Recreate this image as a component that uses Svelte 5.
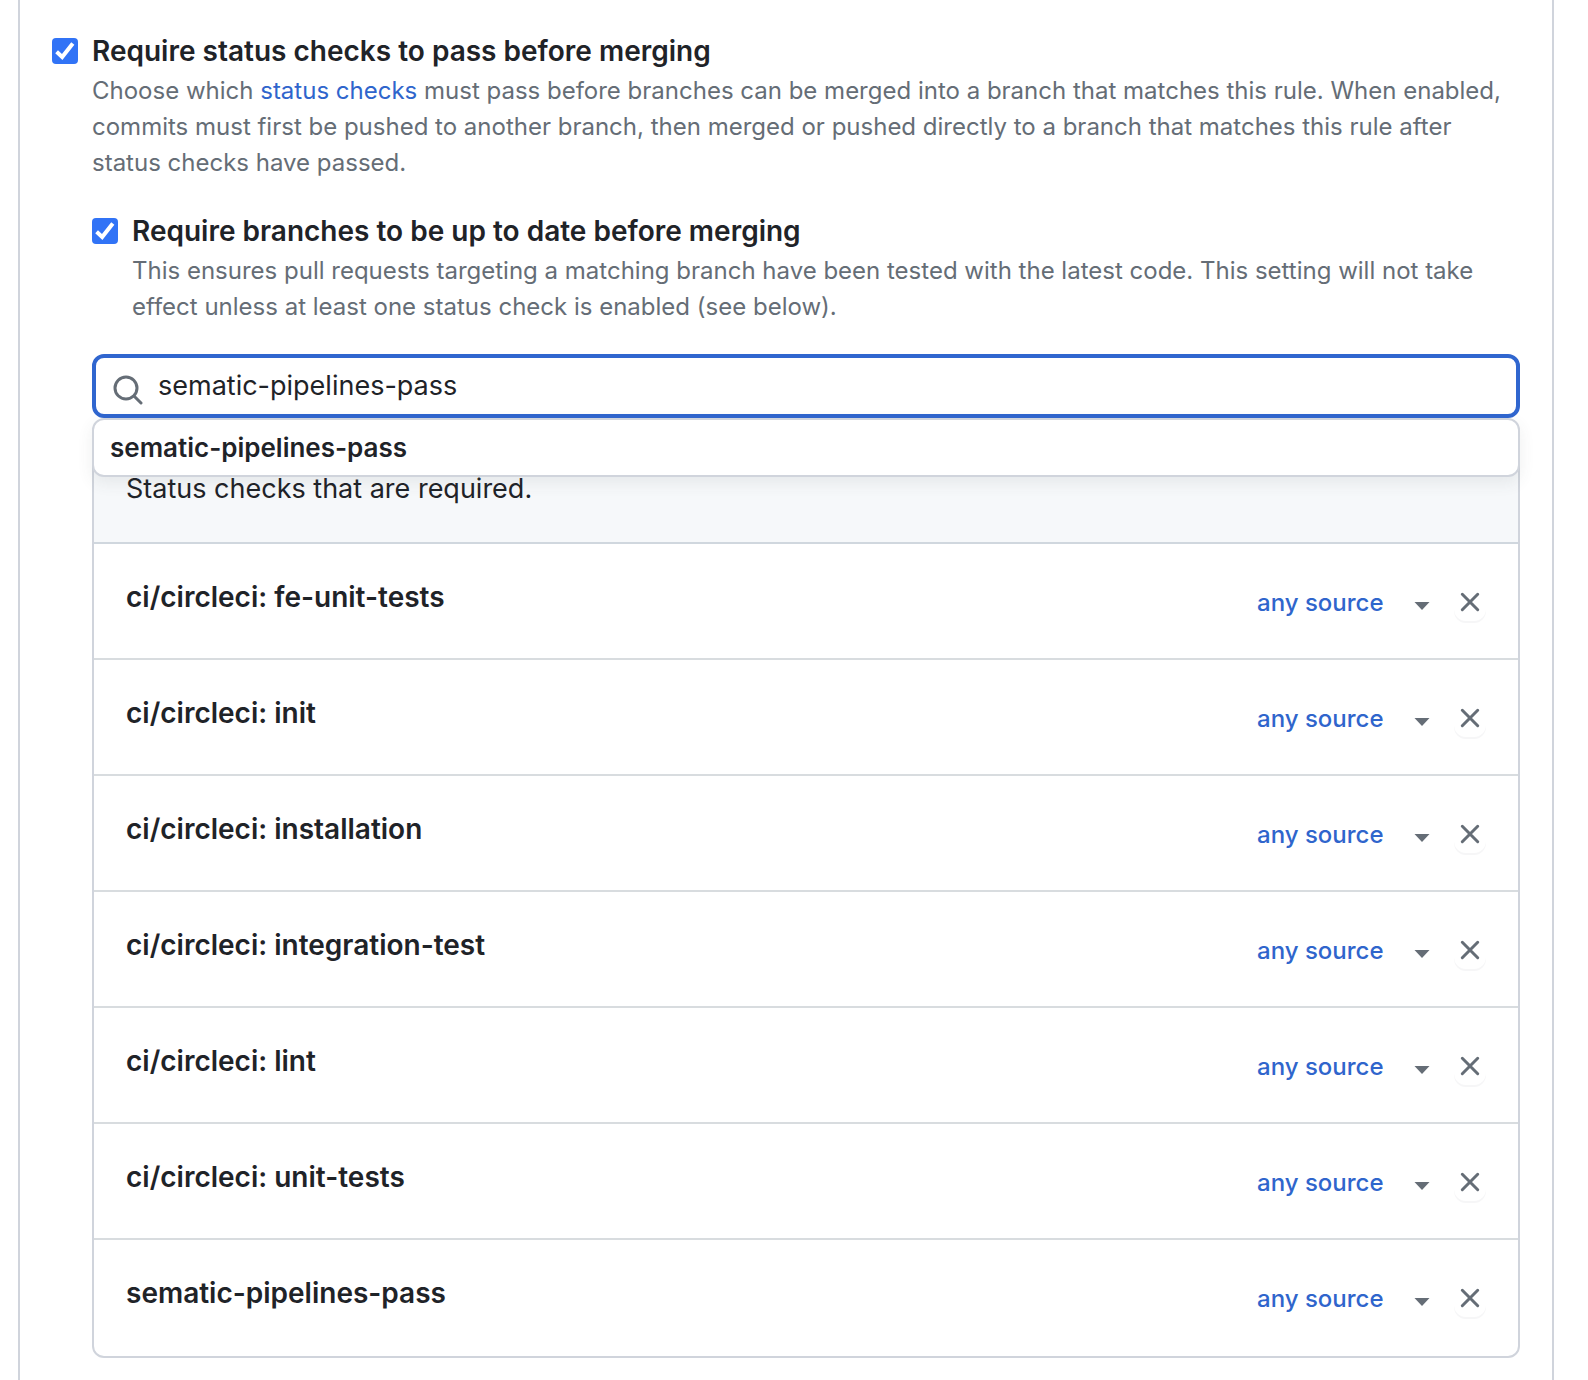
<script>
  const checks = [
    'ci/circleci: fe-unit-tests',
    'ci/circleci: init',
    'ci/circleci: installation',
    'ci/circleci: integration-test',
    'ci/circleci: lint',
    'ci/circleci: unit-tests',
    'sematic-pipelines-pass',
  ];
  let strict = $state(true);
  let required = $state(true);
  let query = $state('sematic-pipelines-pass');
</script>

{#snippet tick()}
  <svg class="tick" viewBox="0 0 26 26" aria-hidden="true">
    <path d="M4.6 13.8 10.2 19 20.8 5.4" fill="none" stroke="#fff" stroke-width="4" />
  </svg>
{/snippet}

<main class="panel">
  <section class="rule">
    <span class="box">
      <input id="required" type="checkbox" bind:checked={required} aria-describedby="required-note" />
      {@render tick()}
    </span>
    <div class="body">
      <label class="title" for="required">Require status checks to pass before merging</label>
      <p class="note" id="required-note">
        Choose which <a href="#status-checks">status checks</a> must pass before branches can be merged into a
        branch that matches this rule. When enabled, commits must first be pushed to another branch, then merged
        or pushed directly to a branch that matches this rule after status checks have passed.
      </p>

      <div class="rule nested">
        <span class="box">
          <input id="strict" type="checkbox" bind:checked={strict} aria-describedby="strict-note" />
          {@render tick()}
        </span>
        <div class="body">
          <label class="title" for="strict">Require branches to be up to date before merging</label>
          <p class="note" id="strict-note">
            This ensures pull requests targeting a matching branch have been tested with the latest code. This
            setting will not take effect unless at least one status check is enabled (see below).
          </p>
        </div>
      </div>

      <div class="search">
        <label class="field">
          <svg class="glass" viewBox="0 0 30 30" aria-hidden="true">
            <circle cx="13" cy="13" r="11" />
            <path d="m21 21 7 7" />
          </svg>
          <input type="text" bind:value={query} aria-label="Search for status checks" />
        </label>
        <div class="results">
          <button type="button">sematic-pipelines-pass</button>
        </div>
      </div>

      <div class="list">
        <header>Status checks that are required.</header>
        <ul>
          {#each checks as name}
            <li>
              <strong>{name}</strong>
              <span class="source">
                <select aria-label="Source for {name}">
                  <option>any source</option>
                </select>
                <svg class="caret" viewBox="0 0 16 8" aria-hidden="true"><path d="M.5 0h15L8 8z" /></svg>
              </span>
              <button class="remove" type="button" aria-label="Remove {name}">
                <svg viewBox="0 0 20 20" aria-hidden="true"><path d="m2.3 2.3 15.4 15.4M17.7 2.3 2.3 17.7" /></svg>
              </button>
            </li>
          {/each}
        </ul>
      </div>
    </div>
  </section>
</main>

<style>
  :global(body) {
    background: #fff;
  }
  .panel,
  .panel * {
    box-sizing: border-box;
  }
  .panel {
    min-height: 100vh;
    margin: 0 34px 0 18px;
    padding: 30px 32px 22px;
    border: solid #d0d4dc;
    border-width: 0 2px;
    color: #1f2328;
    font: 28px/42px Inter, "Liberation Sans", sans-serif;
  }
  input,
  select,
  button {
    margin: 0;
    padding: 0;
    border: 0;
    background: none;
    color: inherit;
    font: inherit;
    appearance: none;
  }
  button,
  select,
  .title {
    cursor: pointer;
  }
  .rule {
    display: flex;
    gap: 14px;
  }
  .body {
    flex: 1;
    min-width: 0;
  }
  .box {
    display: grid;
    flex: none;
    width: 26px;
    height: 26px;
    margin-top: 8px;
  }
  .box input,
  .tick {
    grid-area: 1 / 1;
    width: 26px;
    height: 26px;
  }
  .box input {
    border: 2px solid #8c959f;
    border-radius: 4px;
  }
  .box input:checked {
    border: 0;
    background: #3173f6;
  }
  .tick {
    visibility: hidden;
    pointer-events: none;
  }
  .box input:checked + .tick {
    visibility: visible;
  }
  .title {
    display: block;
    font-weight: 600;
  }
  .note {
    margin: 0;
    padding-top: 1px;
    color: #656d76;
    font-size: 24px;
    line-height: 36px;
  }
  a {
    color: #2f65cc;
    text-decoration: none;
  }
  .nested {
    margin-top: 29px;
  }
  .search {
    position: relative;
    margin-top: 29px;
  }
  .field {
    display: flex;
    align-items: center;
    gap: 15px;
    height: 64px;
    padding: 0 20px 0 17px;
    border: 4px solid #3066cf;
    border-radius: 12px;
    font-size: 27px;
  }
  .glass {
    flex: none;
    width: 30px;
    height: 30px;
    margin-top: 8px;
    fill: none;
    stroke: #656d76;
    stroke-width: 3;
    stroke-linecap: round;
  }
  .field input {
    flex: 1;
    min-width: 0;
    outline: 0;
  }
  .results {
    position: absolute;
    top: 100%;
    right: 0;
    left: 0;
    border: 2px solid #d0d4dc;
    border-radius: 12px;
    background: #fff;
    box-shadow: 0 6px 16px rgba(66, 74, 83, 0.09);
  }
  .results button {
    display: block;
    width: 100%;
    padding: 8px 16px;
    font-size: 26px;
    font-weight: 600;
    line-height: 39px;
    text-align: left;
  }
  .list {
    margin-top: 16px;
    border: 2px solid #d0d4dc;
    border-radius: 12px;
    overflow: hidden;
  }
  header {
    padding: 32px;
    border-bottom: 2px solid #d0d7de;
    background: #f6f8fa;
    font-size: 27px;
  }
  ul {
    margin: 0;
    padding: 0;
    list-style: none;
  }
  li {
    display: flex;
    align-items: center;
    height: 116px;
    padding: 2px 32px 0;
    border-bottom: 2px solid #d8dcdf;
  }
  li:last-child {
    border-color: transparent;
  }
  strong {
    flex: 1;
    padding-bottom: 10px;
    font-weight: 600;
  }
  .source {
    display: grid;
    align-items: center;
    padding-top: 2px;
  }
  .source select,
  .caret {
    grid-area: 1 / 1;
  }
  .source select {
    padding-right: 46px;
    color: #2f65cc;
    font-size: 24px;
    font-weight: 500;
    line-height: 36px;
  }
  .caret {
    justify-self: end;
    width: 16px;
    height: 8px;
    margin-top: 6px;
    fill: #656d76;
    pointer-events: none;
  }
  .remove {
    display: grid;
    place-items: center;
    width: 32px;
    height: 38px;
    margin-left: 24px;
    border-radius: 12px;
    box-shadow: 0 2px 0 rgba(31, 35, 40, 0.04);
  }
  .remove svg {
    width: 20px;
    height: 20px;
    fill: none;
    stroke: #656d76;
    stroke-width: 3;
    stroke-linecap: round;
  }
</style>
